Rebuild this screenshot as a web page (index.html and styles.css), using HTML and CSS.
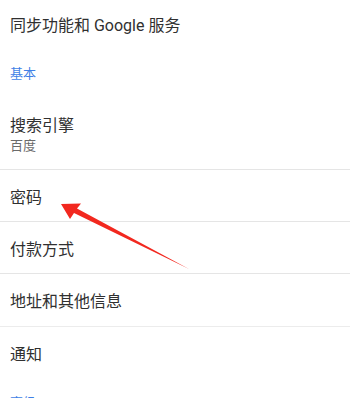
FILE: index.html
```html
<!DOCTYPE html>
<html lang="zh">
<head>
<meta charset="utf-8">
<link rel="stylesheet" href="styles.css">
</head>
<body>
<div class="page">
  <div class="row row-top">同步功能和 Google 服务</div>
  <div class="section">基本</div>
  <div class="row row-sub">
    <div class="title">搜索引擎</div>
    <div class="subtitle">百度</div>
  </div>
  <div class="row">密码</div>
  <div class="row">付款方式</div>
  <div class="row row-last-div">地址和其他信息</div>
  <div class="row row-plain">通知</div>
  <div class="section section-b">高级</div>
  <svg class="arrow" width="350" height="398" viewBox="0 0 350 398">
    <polygon points="61,204 81,203.5 77,208.5 189,269 74,213 70,219" fill="#f2281f"/>
  </svg>
</div>
</body>
</html>
```

FILE: styles.css
```css
html, body {
  margin: 0;
  padding: 0;
  background: #ffffff;
}
.page {
  position: relative;
  width: 350px;
  height: 398px;
  overflow: hidden;
  font-family: Roboto, "Noto Sans CJK SC", sans-serif;
  color: #303030;
}
.row {
  height: 51px;
  border-bottom: 1px solid #e5e5e5;
  display: flex;
  align-items: center;
  padding-left: 10px;
  font-size: 16px;
  box-sizing: content-box;
}
.row-top {
  height: 48px;
  border-bottom: none;
}
.row-sub {
  height: auto;
  display: block;
  padding-top: 16px;
  padding-bottom: 13px;
}
.title {
  font-size: 16px;
  line-height: 20px;
}
.subtitle {
  font-size: 13px;
  line-height: 20px;
  color: #6b6b6b;
}
.row-last-div {
  height: 52px;
  border-bottom: 1px solid #ececec;
}
.row-plain {
  border-bottom: none;
}
.section {
  height: 36px;
  padding-top: 16px;
  padding-left: 10px;
  font-size: 13px;
  line-height: 20px;
  color: #3f7fe6;
}
.section-b {
  padding-top: 15px;
}
.arrow {
  position: absolute;
  left: 0;
  top: 0;
}
```
